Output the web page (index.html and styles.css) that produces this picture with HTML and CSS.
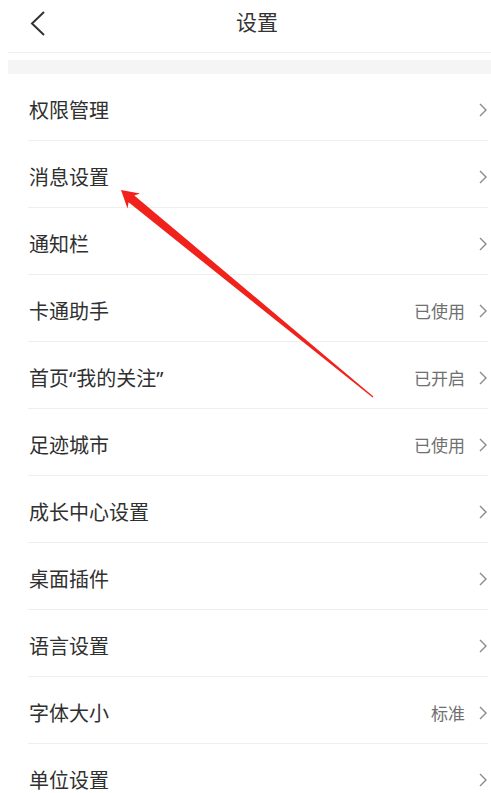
FILE: index.html
```html
<!DOCTYPE html>
<html lang="zh-CN">
<head>
<meta charset="utf-8">
<title>设置</title>
<link rel="stylesheet" href="styles.css">
</head>
<body>
<div class="page">
  <header class="header">
    <svg class="back" width="16" height="25" viewBox="0 0 16 25"><path d="M14 1 L2 12.5 L14 24" fill="none" stroke="#333" stroke-width="2"/></svg>
    <h1 class="title">设置</h1>
  </header>
  <div class="band"></div>
  <ul class="list">
    <li class="row"><span class="label">权限管理</span><span class="right"><svg class="chev" width="8" height="14" viewBox="0 0 8 14"><path d="M1 1 L7 7 L1 13" fill="none" stroke="#8a8a8a" stroke-width="1.4"/></svg></span></li>
    <li class="row"><span class="label">消息设置</span><span class="right"><svg class="chev" width="8" height="14" viewBox="0 0 8 14"><path d="M1 1 L7 7 L1 13" fill="none" stroke="#8a8a8a" stroke-width="1.4"/></svg></span></li>
    <li class="row"><span class="label">通知栏</span><span class="right"><svg class="chev" width="8" height="14" viewBox="0 0 8 14"><path d="M1 1 L7 7 L1 13" fill="none" stroke="#8a8a8a" stroke-width="1.4"/></svg></span></li>
    <li class="row"><span class="label">卡通助手</span><span class="right"><span class="value">已使用</span><svg class="chev" width="8" height="14" viewBox="0 0 8 14"><path d="M1 1 L7 7 L1 13" fill="none" stroke="#8a8a8a" stroke-width="1.4"/></svg></span></li>
    <li class="row"><span class="label">首页“我的关注”</span><span class="right"><span class="value">已开启</span><svg class="chev" width="8" height="14" viewBox="0 0 8 14"><path d="M1 1 L7 7 L1 13" fill="none" stroke="#8a8a8a" stroke-width="1.4"/></svg></span></li>
    <li class="row"><span class="label">足迹城市</span><span class="right"><span class="value">已使用</span><svg class="chev" width="8" height="14" viewBox="0 0 8 14"><path d="M1 1 L7 7 L1 13" fill="none" stroke="#8a8a8a" stroke-width="1.4"/></svg></span></li>
    <li class="row"><span class="label">成长中心设置</span><span class="right"><svg class="chev" width="8" height="14" viewBox="0 0 8 14"><path d="M1 1 L7 7 L1 13" fill="none" stroke="#8a8a8a" stroke-width="1.4"/></svg></span></li>
    <li class="row"><span class="label">桌面插件</span><span class="right"><svg class="chev" width="8" height="14" viewBox="0 0 8 14"><path d="M1 1 L7 7 L1 13" fill="none" stroke="#8a8a8a" stroke-width="1.4"/></svg></span></li>
    <li class="row"><span class="label">语言设置</span><span class="right"><svg class="chev" width="8" height="14" viewBox="0 0 8 14"><path d="M1 1 L7 7 L1 13" fill="none" stroke="#8a8a8a" stroke-width="1.4"/></svg></span></li>
    <li class="row"><span class="label">字体大小</span><span class="right"><span class="value">标准</span><svg class="chev" width="8" height="14" viewBox="0 0 8 14"><path d="M1 1 L7 7 L1 13" fill="none" stroke="#8a8a8a" stroke-width="1.4"/></svg></span></li>
    <li class="row"><span class="label">单位设置</span><span class="right"><svg class="chev" width="8" height="14" viewBox="0 0 8 14"><path d="M1 1 L7 7 L1 13" fill="none" stroke="#8a8a8a" stroke-width="1.4"/></svg></span></li>
  </ul>
  <svg class="arrow" width="491" height="793" viewBox="0 0 491 793">
    <polygon points="121,190 140,193.5 134.3,195.5 373.4,396.4 372.6,397.6 128.6,202.3 127.5,208.5" fill="#f0221b"/>
  </svg>
</div>
</body>
</html>
```
FILE: styles.css
```css
html, body {
  margin: 0;
  padding: 0;
  background: #fff;
}
body {
  font-family: "Noto Sans", "Noto Sans CJK SC", sans-serif;
  color: #333;
  overflow: hidden;
}
.page {
  position: relative;
  width: 491px;
  height: 793px;
  overflow: hidden;
  padding-left: 8px;
  box-sizing: border-box;
}
.header {
  height: 53px;
  border-bottom: 1px solid #eeeeee;
  display: flex;
  align-items: center;
  box-sizing: border-box;
}
.back {
  margin-left: 22px;
  margin-top: -6px;
  flex: none;
}
.title {
  margin: -7px 0 0 190px;
  font-size: 21px;
  font-weight: normal;
  color: #333;
  line-height: 1;
}
.band {
  margin-top: 7px;
  height: 14px;
  background: #f5f5f5;
}
.list {
  list-style: none;
  margin: 0 3px 0 20px;
  padding: 0;
}
.row {
  height: 67px;
  border-bottom: 1px solid #eeeeee;
  box-sizing: border-box;
  display: flex;
  align-items: center;
  justify-content: space-between;
  padding-top: 5px;
  padding-left: 1px;
}
.label {
  font-size: 20px;
  color: #303030;
}
.right {
  display: flex;
  align-items: center;
  gap: 14px;
  padding-right: 1px;
}
.value {
  font-size: 17px;
  color: #707070;
}
.chev {
  display: block;
}
.arrow {
  position: absolute;
  left: 0;
  top: 0;
  pointer-events: none;
}
```
